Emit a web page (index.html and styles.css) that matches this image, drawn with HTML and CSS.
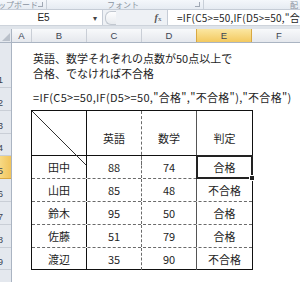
FILE: index.html
```html
<!DOCTYPE html>
<html lang="ja">
<head>
  <meta charset="UTF-8">
  <title>合格判定</title>
  <link rel="stylesheet" href="styles.css">
</head>
<body>
  <div class="window">
    <!-- Ribbon strip (cut off at the top) -->
    <div class="ribbon">
      <div class="group group-clip">
        <span class="group-label">ップボード</span>
        <span class="launcher"></span>
      </div>
      <div class="group group-font">
        <span class="group-label">フォント</span>
        <span class="launcher"></span>
      </div>
      <div class="group group-align">
        <span class="group-label">配</span>
      </div>
    </div>

    <!-- Formula bar -->
    <div class="formula-bar">
      <div class="name-box">
        <span class="cell-ref">E5</span>
        <span class="dropdown">▾</span>
      </div>
      <div class="splitter"><span class="knob"></span></div>
      <div class="fx"><i>f</i><span>x</span></div>
      <div class="formula-input">=IF(C5&gt;=50,IF(D5&gt;=50,"合格","不合格"),"不合格")</div>
    </div>

    <!-- Worksheet -->
    <div class="sheet">
      <div class="corner"><span class="corner-tri"></span></div>

      <div class="col-heads">
        <div class="col-head col-a">A</div>
        <div class="col-head">B</div>
        <div class="col-head">C</div>
        <div class="col-head">D</div>
        <div class="col-head active">E</div>
        <div class="col-head">F</div>
      </div>

      <div class="row-heads">
        <div class="row-head tall">1</div>
        <div class="row-head">2</div>
        <div class="row-head">3</div>
        <div class="row-head short">4</div>
        <div class="row-head active">5</div>
        <div class="row-head">6</div>
        <div class="row-head">7</div>
        <div class="row-head">8</div>
        <div class="row-head short">9</div>
        <div class="row-head">10</div>
      </div>

      <div class="cells">
        <div class="note">英語、数学それぞれの点数が50点以上で<br>合格、でなければ不合格</div>
        <div class="formula-text">=IF(C5&gt;=50,IF(D5&gt;=50,"合格","不合格"),"不合格")</div>

        <div class="score-table">
          <div class="t-row t-head">
            <div class="cell c-b diag">
              <svg viewBox="0 0 100 100" preserveAspectRatio="none"><line x1="0" y1="0" x2="100" y2="100" stroke="#333" stroke-width="1" vector-effect="non-scaling-stroke"/></svg>
            </div>
            <div class="cell c-c">英語</div>
            <div class="cell c-d">数学</div>
            <div class="cell c-e">判定</div>
          </div>
          <div class="t-row">
            <div class="cell c-b">田中</div>
            <div class="cell c-c">88</div>
            <div class="cell c-d">74</div>
            <div class="cell c-e selected">合格</div>
          </div>
          <div class="t-row">
            <div class="cell c-b">山田</div>
            <div class="cell c-c">85</div>
            <div class="cell c-d">48</div>
            <div class="cell c-e">不合格</div>
          </div>
          <div class="t-row">
            <div class="cell c-b">鈴木</div>
            <div class="cell c-c">95</div>
            <div class="cell c-d">50</div>
            <div class="cell c-e">合格</div>
          </div>
          <div class="t-row">
            <div class="cell c-b">佐藤</div>
            <div class="cell c-c">51</div>
            <div class="cell c-d">79</div>
            <div class="cell c-e">合格</div>
          </div>
          <div class="t-row short">
            <div class="cell c-b">渡辺</div>
            <div class="cell c-c">35</div>
            <div class="cell c-d">90</div>
            <div class="cell c-e">不合格</div>
          </div>
        </div>
      </div>
    </div>
  </div>
</body>
</html>
```

FILE: styles.css
```css
/* General */
body {
  margin: 0;
  background: #fff;
  font-family: "Noto Sans CJK JP", sans-serif;
  color: #1e1e1e;
  overflow: hidden;
}

.window {
  width: 300px;
  height: 282px;
  overflow: hidden;
  background: #dfe4ea;
}

/* Ribbon */
.ribbon {
  display: flex;
  height: 9px;
  background: linear-gradient(#f4f7fb, #e6ebf2);
  border-bottom: 1px solid #c5ccd6;
  overflow: hidden;
}

.group {
  position: relative;
  display: flex;
  align-items: flex-end;
  border-right: 1px solid #c8cfd8;
  overflow: hidden;
}

.group-clip { width: 46px; }
.group-font { width: 156px; justify-content: center; }
.group-align { flex: 1; justify-content: flex-end; border-right: none; padding-right: 2px; }

.group-label {
  font-size: 8px;
  line-height: 8px;
  color: #8a93a0;
  white-space: nowrap;
}

.group-clip .group-label { margin-left: -2px; }
.group-font .group-label { margin-left: -4px; }

.launcher {
  position: absolute;
  right: 3px;
  bottom: 2px;
  width: 4px;
  height: 4px;
  border-right: 1px solid #a0a8b4;
  border-bottom: 1px solid #a0a8b4;
}

/* Formula bar */
.formula-bar {
  display: flex;
  height: 15px;
  margin-bottom: 3px;
  background: #eef1f5;
  border-bottom: 1px solid #cdd3db;
}

.name-box {
  width: 103px;
  display: flex;
  align-items: center;
  background: #fff;
  border-right: 1px solid #c5ccd6;
  box-sizing: border-box;
}

.cell-ref {
  flex: 1;
  text-align: center;
  font-family: "Liberation Sans", sans-serif;
  font-size: 10px;
  color: #222;
  padding-right: 6px;
}

.dropdown {
  font-size: 8px;
  color: #444;
  width: 9px;
}

.splitter {
  width: 44px;
  display: flex;
  align-items: center;
  padding-left: 2px;
}

.knob {
  width: 10px;
  height: 12px;
  border-radius: 6px 0 0 6px;
  border: 1px solid #c2c8d0;
  border-right: none;
  background: linear-gradient(#fdfdfe, #e8ebef);
}

.fx {
  width: 18px;
  display: flex;
  align-items: center;
  justify-content: center;
  font-family: "Liberation Serif", serif;
  font-size: 10px;
  color: #555;
  border-right: 1px solid #c5ccd6;
}

.fx i { font-weight: bold; }
.fx span { font-size: 7px; margin-top: 3px; }

.formula-input {
  flex: 1;
  background: #fff;
  padding-left: 9px;
  font-size: 10px;
  letter-spacing: 0.2px;
  line-height: 15px;
  white-space: nowrap;
  overflow: hidden;
}

/* Sheet */
.sheet {
  display: grid;
  grid-template-columns: 12px 1fr;
  grid-template-rows: 14px 1fr;
  background: #fff;
}

.corner {
  position: relative;
  background: #e4e8ee;
  border-right: 1px solid #aab4c2;
  border-bottom: 1px solid #aab4c2;
  box-sizing: border-box;
}

.corner-tri {
  position: absolute;
  right: 1px;
  bottom: 1px;
  width: 0;
  height: 0;
  border-left: 8px solid transparent;
  border-bottom: 8px solid #b9c0ca;
}

.col-heads {
  display: flex;
  background: linear-gradient(#f8f9fb, #e5e8ed);
  border-bottom: 1px solid #aab4c2;
}

.col-head {
  width: 55px;
  flex: none;
  box-sizing: border-box;
  border-right: 1px solid #c9ced6;
  text-align: center;
  font-family: "Liberation Sans", sans-serif;
  font-size: 9.5px;
  line-height: 13px;
  color: #3c4452;
}

.col-head.col-a { width: 20px; }

.col-head.active {
  background: linear-gradient(#fbe7a2, #f3c95f);
  border-right-color: #d8a842;
  border-left: 1px solid #d8a842;
  margin-left: -1px;
  width: 56px;
}

.row-heads {
  display: flex;
  flex-direction: column;
  background: #e4e8ee;
  border-right: 1px solid #aab4c2;
}

.row-head {
  height: 23px;
  flex: none;
  box-sizing: border-box;
  display: flex;
  align-items: flex-end;
  justify-content: flex-end;
  padding: 0 8px 2px 0;
  border-bottom: 1px solid #c9ced6;
  font-family: "Liberation Sans", sans-serif;
  font-size: 9.5px;
  color: #3c4452;
}

.row-head.tall { height: 45px; }
.row-head.short { height: 22px; }

.row-head.active {
  background: linear-gradient(90deg, #f7d984, #f1c45c);
  border-bottom-color: #d8a842;
}

/* Cells area */
.cells {
  display: grid;
  grid-template-columns: 20px 55px 55px 55px 55px 55px;
  grid-template-rows: 45px 23px 23px 22px 23px 23px 23px 23px 22px 23px;
}

.note {
  grid-row: 1;
  grid-column: 2 / span 5;
  padding: 8px 0 0 1px;
  font-size: 11px;
  line-height: 15px;
  white-space: nowrap;
}

.formula-text {
  grid-row: 2;
  grid-column: 2 / span 5;
  padding: 2px 0 0 1px;
  font-size: 11px;
  letter-spacing: 0.3px;
  line-height: 15px;
  white-space: nowrap;
}

/* Score table */
.score-table {
  grid-row: 3 / span 7;
  grid-column: 2 / span 4;
  display: flex;
  flex-direction: column;
  border: 1px solid #111;
  margin: -1px 0 0 -1px;
  width: 222px;
  box-sizing: border-box;
}

.t-row {
  display: grid;
  grid-template-columns: 55px 55px 55px 1fr;
  height: 23px;
  flex: none;
  box-sizing: border-box;
  border-bottom: 1px dashed #6a6a6a;
}

.t-row.t-head {
  height: 45px;
  border-bottom: 1px solid #111;
}

.t-row.short {
  height: 22px;
  border-bottom: none;
}

.cell {
  position: relative;
  display: flex;
  align-items: center;
  justify-content: center;
  box-sizing: border-box;
  font-size: 11px;
}

.c-b { border-right: 1px solid #111; }
.c-c { border-right: 1px dashed #6a6a6a; }
.c-d { border-right: 1px solid #555; }

.diag svg {
  width: 100%;
  height: 100%;
  display: block;
}

.selected {
  outline: 2px solid #222;
  outline-offset: -1px;
}

.selected::after {
  content: "";
  position: absolute;
  right: -3px;
  bottom: -3px;
  width: 4px;
  height: 4px;
  background: #222;
  border: 1px solid #fff;
}
```
